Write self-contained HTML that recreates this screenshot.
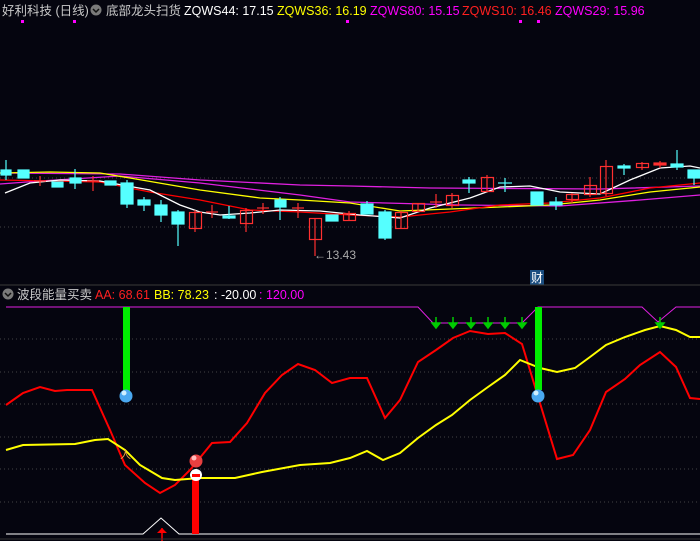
<!DOCTYPE html>
<html><head><meta charset="utf-8"><style>
body{margin:0;background:#05050f;width:700px;height:541px;overflow:hidden;font-family:"Liberation Sans","Noto Sans CJK SC",sans-serif}
svg{position:absolute;left:0;top:0}
</style></head><body>
<svg width="700" height="541" xmlns="http://www.w3.org/2000/svg" font-family="Liberation Sans, Noto Sans CJK SC, sans-serif">
<rect width="700" height="541" fill="#05050f"/>
<text x="2" y="15" font-size="12.5" fill="#c8c8c8">好利科技 (日线)</text>
<circle cx="96" cy="10" r="5.5" fill="#7a7a7a"/><path d="M93 9l3 3 3-3" stroke="#111" stroke-width="1.5" fill="none"/>
<text x="106" y="15" font-size="12.5" fill="#c8c8c8">底部龙头扫货</text>
<text x="184" y="15" font-size="12.5" fill="#ffffff">ZQWS44: 17.15</text>
<text x="277" y="15" font-size="12.5" fill="#ffff00">ZQWS36: 16.19</text>
<text x="370" y="15" font-size="12.5" fill="#ff00ff">ZQWS80: 15.15</text>
<text x="462" y="15" font-size="12.5" fill="#ff2020">ZQWS10: 16.46</text>
<text x="555" y="15" font-size="12.5" fill="#ff00ff">ZQWS29: 15.96</text>
<g fill="#ff00ff"><rect x="21" y="20" width="3" height="3"/><rect x="73" y="20" width="3" height="3"/><rect x="346" y="20" width="3" height="3"/><rect x="519" y="20" width="3" height="3"/><rect x="537" y="20" width="3" height="3"/></g>
<g stroke="#444" stroke-dasharray="1,3" stroke-width="1">
<line x1="0" y1="178" x2="700" y2="178"/><line x1="0" y1="227" x2="700" y2="227"/>
<line x1="0" y1="339" x2="700" y2="339"/><line x1="0" y1="372" x2="700" y2="372"/><line x1="0" y1="404" x2="700" y2="404"/><line x1="0" y1="437" x2="700" y2="437"/><line x1="0" y1="469" x2="700" y2="469"/><line x1="0" y1="502" x2="700" y2="502"/>
</g>
<g fill="none" stroke-width="1.3">
<polyline stroke="#e020e0" points="0,173 120,174 200,180 300,185 350,186 430,188 600,189 700,186"/>
<polyline stroke="#e020e0" points="0,184 40,181 120,176 200,183 300,195 350,202 460,205 560,206 640,200 700,195"/>
<polyline stroke="#ffff00" points="0,173 50,172 100,173 130,178 200,190 260,198 300,200 350,203 400,211 500,207 550,205 600,200 650,192 700,187"/>
<polyline stroke="#ff0000" points="0,180 100,182 150,192 200,200 250,210 300,212 350,215 400,217 450,212 500,205 550,203 600,198 650,188 700,183"/>
<polyline stroke="#ffffff" points="5,193 30,183 60,180 100,181 150,190 180,205 200,212 220,215 250,213 280,210 320,211 360,215 400,218 430,208 470,198 500,187 530,186 560,192 600,194 630,180 660,168 690,166 700,168"/>
</g>
<g stroke-width="1.2">
<g fill="#55ffff" stroke="#55ffff">
<line x1="6" y1="160" x2="6" y2="180"/><rect x="1" y="170" width="10" height="5"/>
<rect x="18" y="170" width="11" height="8"/>
<rect x="52" y="182" width="11" height="5"/>
<line x1="75" y1="169" x2="75" y2="189"/><rect x="70" y="178" width="11" height="5"/>
<rect x="105" y="181" width="11" height="4"/>
<line x1="127" y1="180" x2="127" y2="208"/><rect x="121" y="183" width="12" height="21"/>
<line x1="144" y1="197" x2="144" y2="211"/><rect x="138" y="200" width="12" height="5"/>
<line x1="161" y1="200" x2="161" y2="222"/><rect x="155" y="205" width="12" height="10"/>
<line x1="178" y1="210" x2="178" y2="246"/><rect x="172" y="212" width="12" height="12"/>
<line x1="229" y1="206" x2="229" y2="219"/><rect x="223" y="216" width="12" height="2"/>
<line x1="280" y1="197" x2="280" y2="220"/><rect x="275" y="200" width="11" height="7"/>
<rect x="326" y="215" width="12" height="6"/>
<line x1="367" y1="201" x2="367" y2="214"/><rect x="361" y="204" width="12" height="10"/>
<line x1="385" y1="210" x2="385" y2="240"/><rect x="379" y="212" width="12" height="26"/>
<line x1="469" y1="177" x2="469" y2="193"/><rect x="463" y="180" width="12" height="3"/>
<line x1="505" y1="178" x2="505" y2="192"/><line x1="498" y1="183" x2="512" y2="183"/>
<rect x="531" y="192" width="12" height="13"/>
<line x1="556" y1="197" x2="556" y2="210"/><rect x="550" y="202" width="12" height="3"/>
<line x1="624" y1="164" x2="624" y2="175"/><rect x="618" y="166" width="12" height="2"/>
<line x1="677" y1="150" x2="677" y2="170"/><rect x="671" y="164" width="12" height="3"/>
<line x1="694" y1="170" x2="694" y2="185"/><rect x="688" y="170" width="12" height="8"/>
</g>
<g fill="none" stroke="#ff3030">
<line x1="40" y1="176" x2="40" y2="186"/><line x1="34" y1="181" x2="46" y2="181"/>
<line x1="93" y1="176" x2="93" y2="191"/><line x1="87" y1="181" x2="99" y2="181"/>
<line x1="195" y1="210" x2="195" y2="232"/><rect x="189.5" y="212.5" width="12" height="16"/>
<line x1="212" y1="205" x2="212" y2="218"/><line x1="206" y1="212" x2="218" y2="212"/>
<line x1="246" y1="208" x2="246" y2="232"/><rect x="240.5" y="210.5" width="12" height="13"/>
<line x1="263" y1="203" x2="263" y2="214"/><line x1="257" y1="208" x2="269" y2="208"/>
<line x1="298" y1="203" x2="298" y2="218"/><line x1="292" y1="208" x2="304" y2="208"/>
<line x1="315" y1="218" x2="315" y2="256"/><rect x="309.5" y="218.5" width="12" height="21"/>
<line x1="349" y1="211" x2="349" y2="221"/><rect x="343.5" y="213.5" width="12" height="7"/>
<line x1="401" y1="211" x2="401" y2="229"/><rect x="395.5" y="212.5" width="12" height="16"/>
<line x1="418" y1="203" x2="418" y2="212"/><rect x="412.5" y="203.5" width="12" height="8"/>
<line x1="436" y1="194" x2="436" y2="208"/><line x1="430" y1="202" x2="442" y2="202"/>
<line x1="452" y1="193" x2="452" y2="208"/><rect x="446.5" y="195.5" width="12" height="10"/>
<line x1="487" y1="175" x2="487" y2="192"/><rect x="481.5" y="177.5" width="12" height="14"/>
<line x1="572" y1="193" x2="572" y2="203"/><rect x="566.5" y="194.5" width="12" height="5"/>
<line x1="590" y1="177" x2="590" y2="197"/><rect x="584.5" y="185.5" width="12" height="9"/>
<line x1="606" y1="160" x2="606" y2="196"/><rect x="600.5" y="166.5" width="12" height="27"/>
<line x1="642" y1="162" x2="642" y2="170"/><rect x="636.5" y="163.5" width="12" height="4"/>
<line x1="660" y1="161" x2="660" y2="168"/><rect x="654" y="163" width="12" height="2" fill="#ff3030"/>
</g>
</g>
<text x="314" y="259" font-size="12" fill="#aaaaaa">←13.43</text>
<rect x="530" y="270" width="14" height="15" fill="#1a4d80"/>
<text x="531" y="282" font-size="12" fill="#ffffff">财</text>
<line x1="0" y1="285" x2="700" y2="285" stroke="#3a3a3a"/>
<circle cx="8" cy="294" r="5.5" fill="#7a7a7a"/><path d="M5 293l3 3 3-3" stroke="#111" stroke-width="1.5" fill="none"/>
<text x="17" y="299" font-size="12.5" fill="#c8c8c8">波段能量买卖</text>
<text x="95" y="299" font-size="12.5" fill="#ff2020">AA: 68.61</text>
<text x="154" y="299" font-size="12.5" fill="#ffff00">BB: 78.23</text>
<text x="214" y="299" font-size="12.5" fill="#ffffff">: -20.00</text>
<text x="259" y="299" font-size="12.5" fill="#ff00ff">: 120.00</text>
<polyline fill="none" stroke="#e020e0" stroke-width="1" points="6,307 418,307 433,323 522,323 538,307 642,307 658,322 676,307 700,307"/>
<polyline fill="none" stroke="#ffffff" stroke-width="1" points="6,534 143,534 161,518 179,534 700,534"/>
<polyline fill="none" stroke="#ff0000" stroke-width="2" points="6,405 23,393 40,387 55,391 67,390 92,390 110,430 125,465 145,483 160,493 175,485 190,470 212,443 230,442 247,423 265,393 282,375 298,364 315,370 332,383 350,378 367,378 385,418 400,400 418,362 436,350 453,338 470,331 488,334 505,333 522,344 557,459 573,455 590,430 606,392 625,379 640,365 660,352 676,367 690,398 700,399"/>
<polyline fill="none" stroke="#ffff00" stroke-width="2" points="6,450 23,445 75,444 95,440 108,439 125,450 140,465 162,478 175,480 200,478 235,478 262,472 300,465 330,463 350,458 367,451 383,460 400,453 418,438 436,425 452,415 470,400 488,387 505,375 520,360 540,368 557,372 575,368 590,357 606,345 625,337 645,330 660,326 676,330 690,337 700,337"/>
<rect x="123" y="307" width="7" height="85" fill="#00ee00"/>
<circle cx="126" cy="396" r="6.5" fill="#4aa8f0"/><circle cx="124" cy="393" r="2.5" fill="#cfefff"/>
<rect x="535" y="307" width="7" height="83" fill="#00ee00"/>
<circle cx="538" cy="396" r="6.5" fill="#4aa8f0"/><circle cx="536" cy="393" r="2.5" fill="#cfefff"/>
<rect x="192" y="470" width="7" height="64" fill="#ff0000"/>
<circle cx="196" cy="475" r="6" fill="#ffffff"/><rect x="192" y="474" width="8" height="3" fill="#ff0000"/>
<circle cx="196" cy="461" r="6.5" fill="#e84040"/><circle cx="194" cy="458" r="2.5" fill="#ffbbbb"/>
<text x="120" y="458" font-size="11" fill="#e8a040">人</text>
<g fill="#00cc00" stroke="#00cc00" stroke-width="1.5">
<g><line x1="436" y1="317" x2="436" y2="324"/><path d="M432 323h8l-4 5z"/></g>
<g><line x1="453" y1="317" x2="453" y2="324"/><path d="M449 323h8l-4 5z"/></g>
<g><line x1="471" y1="317" x2="471" y2="324"/><path d="M467 323h8l-4 5z"/></g>
<g><line x1="488" y1="317" x2="488" y2="324"/><path d="M484 323h8l-4 5z"/></g>
<g><line x1="505" y1="317" x2="505" y2="324"/><path d="M501 323h8l-4 5z"/></g>
<g><line x1="522" y1="317" x2="522" y2="324"/><path d="M518 323h8l-4 5z"/></g>
<g><line x1="660" y1="317" x2="660" y2="324"/><path d="M656 323h8l-4 5z"/></g>
</g>
<line x1="162" y1="528" x2="162" y2="541" stroke="#ff0000" stroke-width="1.5"/><path d="M157 533l5-5 5 5z" fill="#ff0000"/>
<line x1="0" y1="539" x2="700" y2="539" stroke="#333"/>
</svg>
</body></html>
